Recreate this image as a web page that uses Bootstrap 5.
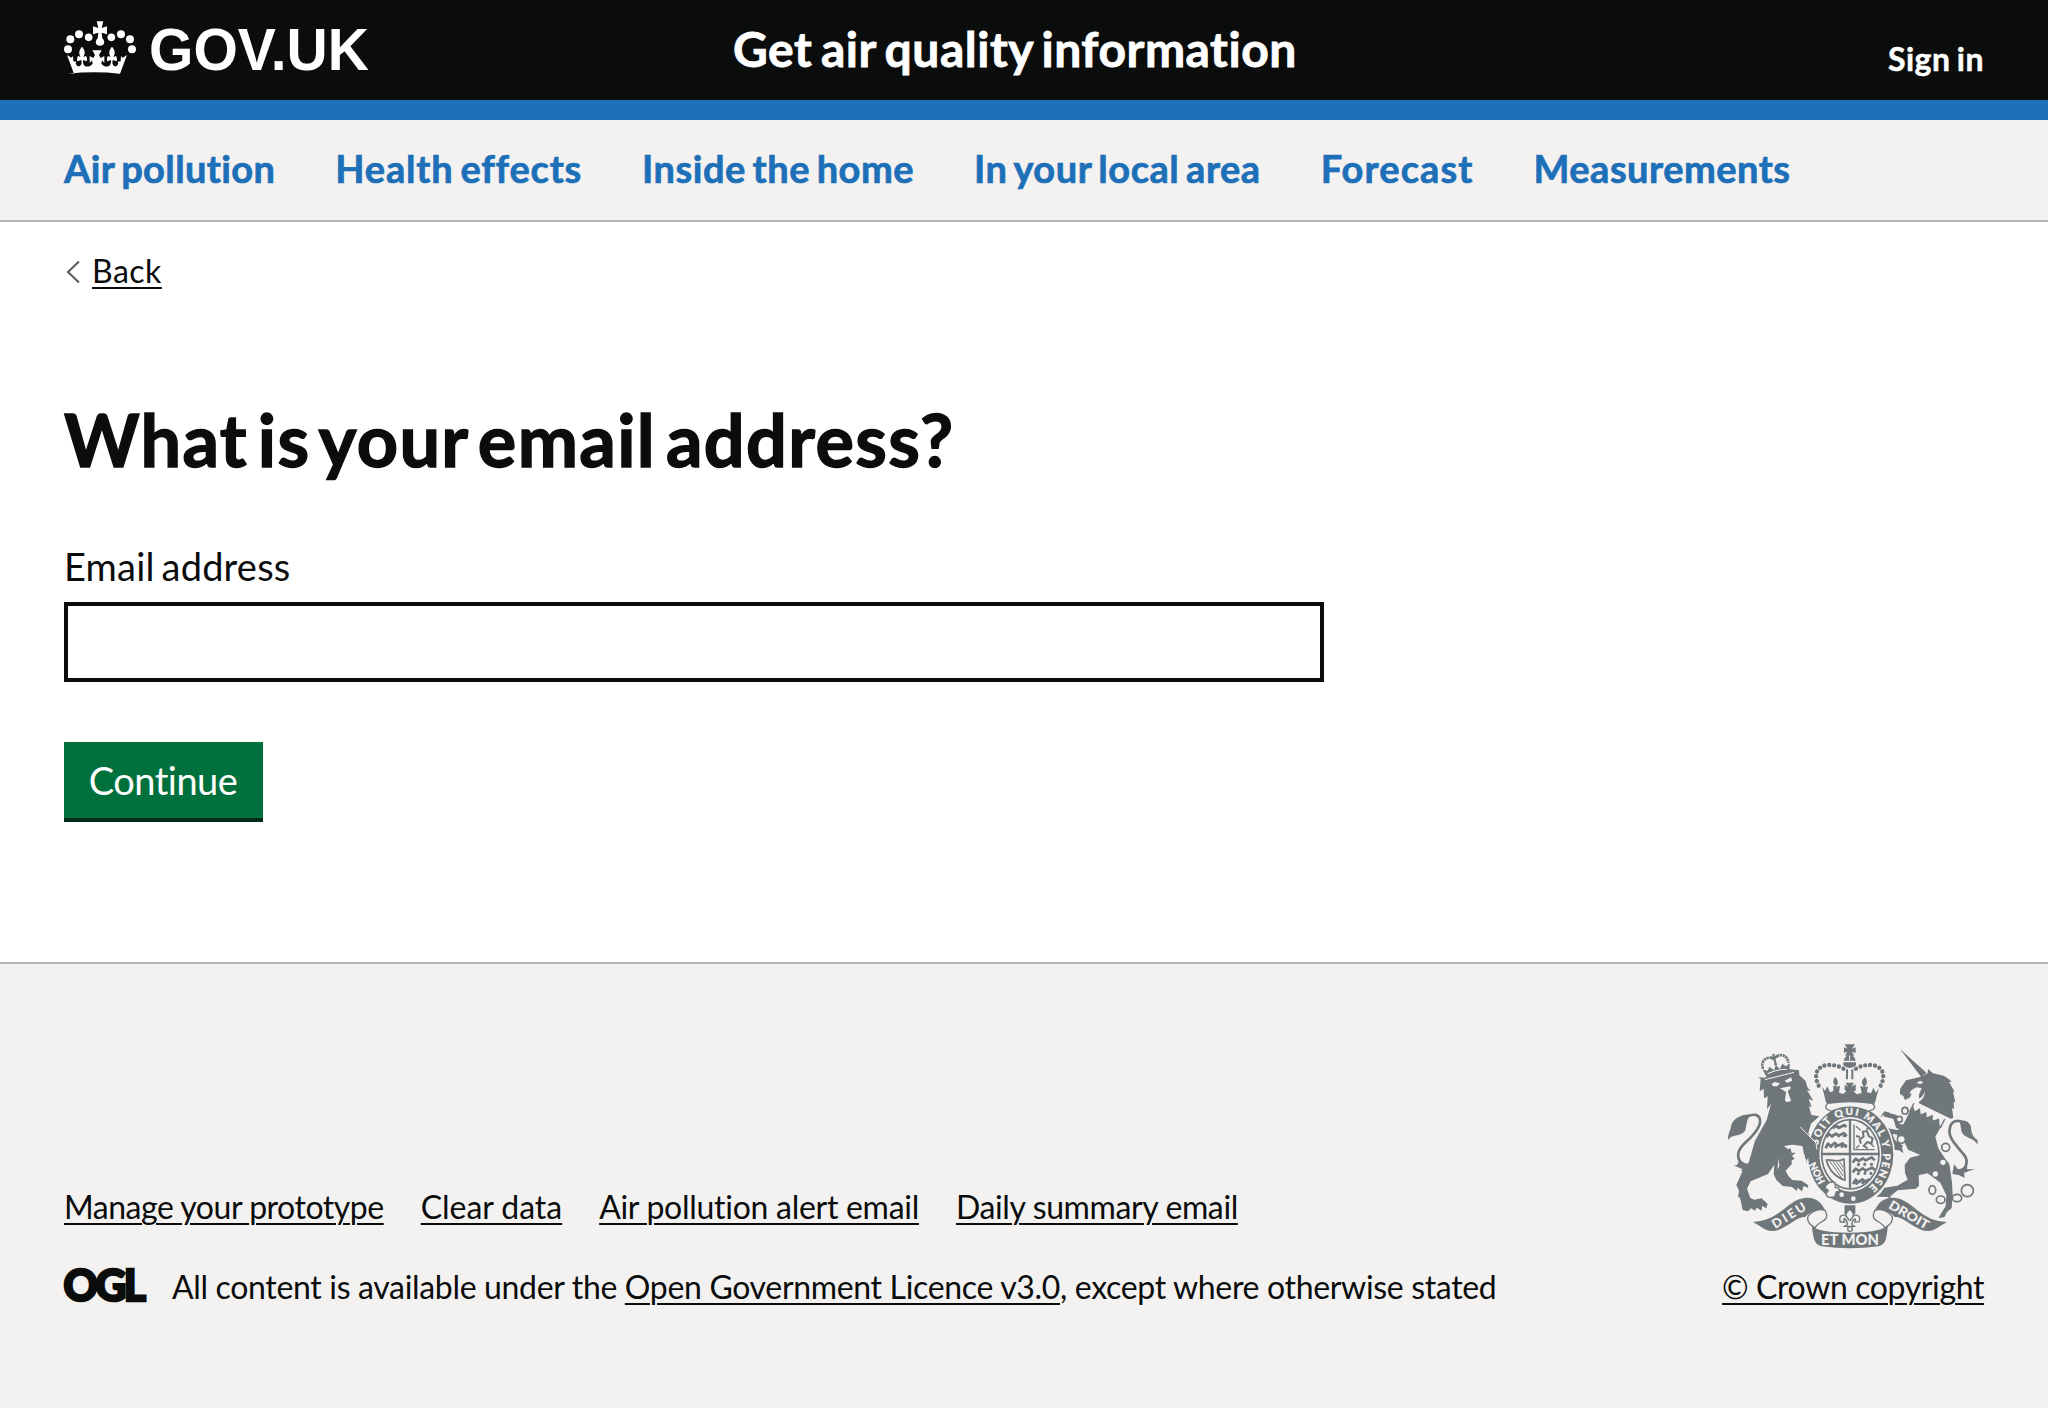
<!DOCTYPE html>
<html lang="en">
<head>
<meta charset="utf-8">
<meta name="viewport" content="width=device-width, initial-scale=1">
<title>What is your email address?</title>
<link href="https://cdn.jsdelivr.net/npm/bootstrap@5.3.0/dist/css/bootstrap.min.css" rel="stylesheet">
<style>
:root{--ink:#0b0c0c;--blue:#1d70b8;--pale:#f3f2f1;--rule:#b1b4b6}
body{font-family:Lato,"Noto Sans",sans-serif;color:var(--ink);font-size:32px;line-height:40px;letter-spacing:-.33px;min-height:1408px}
a{color:var(--ink);text-decoration-thickness:2px;text-underline-offset:4px}
a:hover{color:var(--ink)}
svg{overflow:visible}
.gutter{padding-left:64px;padding-right:64px}
.masthead{height:120px;background:var(--ink);border-bottom:20px solid var(--blue)}
.masthead a{color:#fff;text-decoration:none}
.brand-link,.service-name,.account{flex:0 0 auto}
.brand-link{width:669px;padding-top:20px}
.service-name{font-size:48px;line-height:60px;font-weight:700;padding-top:19px;letter-spacing:.5px;word-spacing:-3.5px;-webkit-text-stroke:.8px}
.account{font-weight:700;padding-top:39px;letter-spacing:.5px;word-spacing:-2px;-webkit-text-stroke:.5px}
.topics{height:102px;background:var(--pale);border-bottom:2px solid var(--rule);gap:60px;font-size:38px;line-height:50px;font-weight:700;padding-top:23px;word-spacing:-3px;-webkit-text-stroke:.7px}
.topics a{color:var(--blue);text-decoration:none}
.topics .t1{letter-spacing:.38px}.topics .t2{letter-spacing:.79px}.topics .t3{letter-spacing:.51px}
.topics .t4{letter-spacing:.53px}.topics .t5{letter-spacing:1.1px}.topics .t6{letter-spacing:.5px}
.back-row{padding-top:29px;gap:13px}
.back-row a{letter-spacing:.5px}
h1{font-size:72px;line-height:80px;font-weight:700;margin:108px 0 0;letter-spacing:1.35px;word-spacing:-9px;-webkit-text-stroke:1.4px}
.form-label{font-size:38px;line-height:50px;margin:62px 0 11px;letter-spacing:.2px;word-spacing:-3px}
.form-control,.form-control:focus{width:1260px;height:80px;border:4px solid var(--ink);border-radius:0;box-shadow:none}
.btn-go,.btn-go:hover{background:#00703c;color:#fff;border:0;border-radius:0;box-shadow:inset 0 -4px #002d18;font-size:38px;line-height:38px;height:80px;width:199px;padding:0 1px 4px 0;margin-top:60px;letter-spacing:-.5px}
.site-footer{margin-top:140px;height:446px;background:var(--pale);border-top:2px solid var(--rule);padding-top:79px}
.meta-links{gap:37px;padding-top:144px}
.meta-links a:nth-child(1){letter-spacing:-.47px}
.meta-links a:nth-child(2){letter-spacing:-.05px}
.meta-links a:nth-child(3){letter-spacing:-.28px}
.meta-links a:nth-child(4){letter-spacing:-.38px}
.licence{margin-top:40px;gap:26px;white-space:pre}
.crown-link{width:262px;text-align:right;white-space:nowrap;letter-spacing:-.38px}
.crown-link svg{display:block;margin:0 0 17px 4px}
</style>
<script src="https://cdn.jsdelivr.net/npm/bootstrap@5.3.0/dist/js/bootstrap.bundle.min.js"></script>
</head>
<body class="bg-white">
<header class="masthead gutter d-flex">
  <a class="brand-link" href="#" aria-label="GOV.UK">
    <svg width="310" height="60" viewBox="64 20 310 60" fill="#fff">
      <g transform="translate(40 0) scale(.33333)">
        <path d="M170 64h20l-5 20 16-5v24l-16-5 2 17c8 8 9 22-7 22s-15-14-7-22l2-17-16 5V79l16 5z"/>
        <circle cx="84" cy="148" r="12"/><circle cx="91" cy="118" r="12"/><circle cx="117" cy="103" r="12"/><circle cx="146" cy="112" r="11.500"/>
        <circle cx="276" cy="148" r="12"/><circle cx="270" cy="118" r="12"/><circle cx="243" cy="103" r="12"/><circle cx="214" cy="112" r="11.500"/>
        <path d="M102 221 81 165l13 8 5-5 1 16 9 1-2 6c6 13 15 9 18-1l-1-10-12 4c-2-5-1-11 2-16l8 3c-7-12-5-20 4-31 9 11 11 19 4 31l8-3c4 5 4 11 2 16l-11-4c-2 24 18 24 29 11l-2-10-7 8v-21l11 6 5-9-8-14h28l-8 14 5 9 11-6v21l-7-8-2 10c11 13 31 13 29-11l-11 4c-2-5-2-11 2-16l8 3c-7-12-5-20 4-31 9 11 11 19 4 31l8-3c3 5 4 11 2 16l-12-4-1 10c3 10 12 14 18 1l-2-6 9-1 1-16 5 5 13-8-21 56q-78-8-156 0z"/>
      </g>
      <text x="149" y="70" font-family="Liberation Sans,sans-serif" font-weight="700" font-size="58.500" textLength="220" lengthAdjust="spacingAndGlyphs" letter-spacing="0">GOV.UK</text>
    </svg>
  </a>
  <a class="service-name" href="#">Get air quality information</a>
  <a class="account ms-auto" href="#">Sign in</a>
</header>
<nav class="topics gutter d-flex">
  <a class="t1" href="#">Air pollution</a><a class="t2" href="#">Health effects</a><a class="t3" href="#">Inside the home</a><a class="t4" href="#">In your local area</a><a class="t5" href="#">Forecast</a><a class="t6" href="#">Measurements</a>
</nav>
<main class="gutter">
  <div class="back-row d-flex">
    <svg width="15" height="40" fill="none" stroke="#505a5f" stroke-width="2"><path d="M15 10.500 4 21l11 10.500"/></svg>
    <a href="#">Back</a>
  </div>
  <h1>What is your email address?</h1>
  <form>
    <label class="form-label d-block" for="email">Email address</label>
    <input class="form-control" id="email" type="email">
    <button class="btn btn-go d-block" type="button">Continue</button>
  </form>
</main>
<footer class="site-footer gutter d-flex justify-content-between">
  <div>
    <div class="meta-links d-flex"><a href="#">Manage your prototype</a><a href="#">Clear data</a><a href="#">Air pollution alert email</a><a href="#">Daily summary email</a></div>
    <div class="licence d-flex"><svg width="82" height="40" viewBox="64 1266 82 40" fill="#0b0c0c" stroke="#0b0c0c" stroke-width="2.500"><text x="63.500" y="1300" font-family="Lato,sans-serif" font-weight="900" font-size="43" letter-spacing="-2.500" textLength="80" lengthAdjust="spacingAndGlyphs">OGL</text></svg><span>All content is available under the <a href="#">Open Government Licence v3.0</a>, except where otherwise stated</span></div>
  </div>
  <div class="crown-link">
    <svg width="255" height="207" viewBox="78 68 765 621" fill="#6f777b" stroke="none" letter-spacing="0">
      <!-- lion -->
      <path d="M192 172 270 147l27 3 1 15 19 17 5 18 9 12-10-2 19 31-14-5 9 24-8-2 7 26 24 4-25 22-8 28 25 50 7 45-14-12-4 13-12-13-5 10-7-22 0-19-8-13-29-4-26 4 12 10 7-4 4 14 12 0-11 10 8 8-10 6 2 9-19 21 8 16 12 12 28 2 20 14-1 7-13-5-5 16-13-11-3 10-14-12-28-3-19-18-8-17 2-29-19 28-52 22-11 22 10 28 12 5 22-4 18 17-4 13-13-7-1 14-15-9-5 9-12-7-9 9-16-4-8-37-6-2 3-19-8-17 17-38 15-12 24-83 35-62 13-48-12 16 2-39-11 6-1-29-12 8 3-38-8-5z"/>
      <path d="m128 447-28-12c18 2 15-10 15-22 16 18 25 18 45 15l-13 30-25-6z"/>
      <path d="M128 433c-25-25-12-48 10-68 28-26 45-51 42-67-4-18-20-17-37-10" fill="none" stroke="#6f777b" stroke-width="8"/>
      <path d="M151 283c-27-2-53 14-57 31-3 18-10 24-10 45 16-20 39-8 52-29 4-20 5-33 15-47z"/>
      <g fill="#f3f2f1"><path d="m215 190 10-5 15 4-8 9h-13zM253 182l20-11 4 10-14 6zM240 204l30-6 2 6-9 9 8 22c9 10-17 15-16 3l3-23z"/><path d="m236 414-4 34 6-12z"/></g>
      <path d="m194 178 88-22" fill="none" stroke="#f3f2f1" stroke-width="3"/>
      <g transform="translate(228 136) rotate(-13)">
        <path d="m-34 30-8-28 14 7 8-10 11 13L0-2 9 12 20-1l8 10 14-7-8 28q-34-7-68 0z"/>
        <path d="M-30 18q30-7 60 0" fill="none" stroke="#f3f2f1" stroke-width="3"/>
        <path d="M-40 0c-4-31 30-34 39-20 9-14 43-11 39 20" fill="none" stroke="#6f777b" stroke-width="8" stroke-dasharray="7 2"/>
        <path d="M-4-36h8l-2 8 8-3v10l-8-2 2 22H-4l2-22-8 2v-10l8 3z"/>
      </g>
      <!-- unicorn -->
      <path d="m600 86 80 72-17 11zM663 169l20-10 1-13 15 13 32 7 14 9 11 10-9-1 17 31-5-1 7 32-5-2 1 22-6-4 4 31-8 2-95-46 0-26 8-20-16-2-14 8-7 10 7 1-6 12-14 7-5-12-10-6 0-15 18-26z"/>
      <path d="M650 188q12-12 20-1l-10 4zM646 240q24-8 29-28-1 24-20 34z" fill="#f3f2f1"/>
      <g transform="translate(640 248) rotate(27)"><path d="M2 0v27h104V0" fill="none" stroke="#6f777b" stroke-width="4"/><path d="M3 25V8l12 12L25 5l10 15L47 6l8 14L68 5l8 15L90 6l11 19z"/></g>
      <path d="m631 270 93 48-18 31 9 35 19 29 14 18 8 54 2 38-3 40-14 12-8 16-18 2 22-36 2-32-18-38-38-28-27 6 1 31-10 9-54 5-22 18 1 10-8-8-35-1 14-12 10-15 39-6 31-18-8-20-1-24 16-22 31-8-37-16-15-33-17-5-2-17 19-18z"/>
      <path d="M618 320 594 318 586 290 553 282M620 342 566 331 579 364 605 382" fill="none" stroke="#6f777b" stroke-width="14" stroke-linejoin="round"/>
      <path d="m558 280-17 11 12-18 18 4zM605 376l5 23-12-9-17-1-4-13z"/>
      <g fill="#f3f2f1"><circle cx="729" cy="426" r="8"/><circle cx="706" cy="461" r="8"/></g>
      <g fill="#f3f2f1" stroke="#6f777b" stroke-width="5"><ellipse cx="615" cy="271" rx="9" ry="10"/><ellipse cx="598" cy="297" rx="9" ry="9"/><ellipse cx="604" cy="357" rx="12" ry="12"/><circle cx="737" cy="381" r="12"/><ellipse cx="697" cy="509" rx="10" ry="13"/><ellipse cx="722" cy="538" rx="13" ry="11"/><ellipse cx="771" cy="533" rx="14" ry="11"/><circle cx="802" cy="511" r="18"/></g>
      <path d="M777 456c25-14 30-36 13-55-25-31-48-50-40-80 5-20 23-23 40-15" fill="none" stroke="#6f777b" stroke-width="8"/>
      <path d="M777 303c17-6 30 0 36 16 1 18 4 30 20 40v14c-9-21-40-18-48-38-4-15-2-24-8-32zM762 432l12 15 14-3 14-14-1 17 24 0-18 5-15 6 2 15-18-9-19-3z"/>
      <!-- garter -->
      <ellipse cx="452" cy="403" rx="133" ry="151" fill="#f3f2f1"/>
      <ellipse cx="452" cy="403" rx="128" ry="147"/>
      <ellipse cx="451" cy="402" rx="93" ry="112" fill="#f3f2f1"/>
      <ellipse cx="451" cy="402" rx="86" ry="104" fill="none" stroke="#6f777b" stroke-width="5"/>
      <path d="M450 298v208M364 401h174" stroke="#6f777b" stroke-width="7"/>
      <g fill="none" stroke="#6f777b" stroke-width="8" stroke-linejoin="round">
        <path d="m377 384 7-14 9 8 11-10 10 8 14-7 10 12m-59-31 8-9 9 7 12-8 8 6 16-8 8 10m-42-24 10-7 8 6 17-9 6 6m-48 62 4-9m10 9 6-9m14 9 2-9m12 9-3-10m-39-22 4-8m13 8 6-7m12 7 2-7m-22-20 2-8"/>
        <path d="m459 491 8-13 9 8 11-9 9 7 12-8m-50-20 9-11 10 7 11-8 9 7 19-9 9 7m-67-22 9-12 9 7 13-8 8 6 18-9 9 9M468 493l4-8m15 6 3-8m-17-19 4-8m16 7 4-8m14 8 3-8m-40-18 3-9m15 8 4-8m17 8 3-8"/>
        <path d="M462 312v76h62M468 318l14 12m40 50-14-15M468 384l10-9" stroke-width="4"/>
        <path d="m483 370-4-13 12-8-3-15 13-2 5 15 12 7-4 16-12-5-11 12 12 7m-23-34-12-3m31-22 12-2" stroke-width="6"/>
        <path d="M379 419c21-2 30 9 53-3l3 64c-26-9-48-30-56-61z" stroke-width="5"/>
        <path d="m389 422 38 54m-28-53 30 44m-20-43 21 30m-12-31 12 18" stroke-width="3"/>
      </g>
      <path id="motto-arc" d="M376 482A99 119 0 1 1 505 502" fill="none"/>
      <g fill="#f3f2f1" stroke="#f3f2f1" stroke-width=".8" font-family="Lato,sans-serif" font-weight="900">
        <text font-size="30" textLength="68" transform="translate(376 484) rotate(-117)" lengthAdjust="spacingAndGlyphs">HON</text>
        <text font-size="31"><textPath href="#motto-arc" startOffset="112" textLength="425">SOIT QUI MAL Y PENSE</textPath></text>
      </g>
      <path d="M385 500c35 20 71 22 105 14l28 12c-45 26-87 22-131-3z"/>
      <path d="M405 487c-13-6-27 2-30 15l10 9-8 10c6 12 17 12 27 8l5-15 9 1-2-12-10-2z" fill="#f3f2f1" stroke="#6f777b" stroke-width="4"/>
      <g fill="#f3f2f1"><circle cx="425" cy="523" r="7"/><circle cx="460" cy="535" r="7"/></g>
      <path d="m300 321 51 50 7 54-17-12-5 14-12-14-4 9-9-25-5-28z"/>
      <path d="m301 320 47 48 3 20" fill="none" stroke="#f3f2f1" stroke-width="3"/>
      <!-- central crown -->
      <path d="M434 72h31l-9 13 11-4v17l-11-4 7 12h-28l7-12-10 4V81l10 4z"/>
      <path d="M432 121c2-22 33-22 35 0zM430 126h38v9q-18 16-38 0z"/><path d="M441 147v30m16-30v30" stroke="#6f777b" stroke-width="6"/>
      <path d="M449 106v14" stroke="#f3f2f1" stroke-width="3"/>
      <g fill="none" stroke="#6f777b" stroke-width="13" stroke-linecap="round" stroke-dasharray=".1 14.500"><path d="M356 196c-20-40 2-62 30-62 19-1 37 6 49 14"/><path d="M542 196c20-40-2-62-30-62-19-1-37 6-49 14"/></g>
      <path d="m378 246-12-48 9 14 7-14 8 18 10-4 0-16 9 1c-14-6-9-21-4-27 9 7 13 20 2 29l13-2-3 20 12 4 10-8-5-4v-16l9 6-6-12h25l-8 12 13-7v19l-7 2 11 9 14-4-4-20 12 1c-12-10-7-21 2-29 6 6 10 22-2 29l11 0-4 16 13 4 7-17 8 15 9-15-13 48q-71-8-143 0z"/>
      <path d="M384 249q66-10 132 0 13 8 5 17l-15 7q-56-25-113 0l-13-7q-7-8 4-17z" fill="#f3f2f1" stroke="#6f777b" stroke-width="4"/>
      <!-- scrolls -->
      <path d="M434 555h32v25l-11 2-5-15-6 15-11-2z"/>
      <path d="M449 566c-22 22-5 25-1 35-15-28-35-16-27 4l13 0c-8-18 8-10 8 8l-8 5h29l-7-5c0-17 15-25 9-8l13-1c7-19-14-31-27-3 3-10 20-15-2-35z" fill="#f3f2f1" stroke="#6f777b" stroke-width="4"/><circle cx="450" cy="626" r="7" fill="#f3f2f1" stroke="#6f777b" stroke-width="4"/>
      <path d="M159 605c85-4 101-69 160-73 32-1 46 16 57 39-33-4-52 8-59 18-31 0-66 44-101 43-20 0-32-14-57-27z"/>
      <path d="M741 605c-85-4-101-69-160-73-32-1-46 16-57 39 33-4 52 8 59 18 31 0 66 44 101 43 20 0 32-14 57-27z"/>
      <path d="M376 571c-25-12-55 13-53 24 2 20 13 19 22 28 8-20 39-20 35-39zM524 571c25-12 55 13 53 24-2 20-13 19-22 28-8-20-39-20-35-39z" fill="#f3f2f1" stroke="#6f777b" stroke-width="4"/>
      <path d="M335 615q18 23 115 22t114-22c-5 34-3 58-29 63q-85 12-170 0c-26-5-25-32-30-63z"/>
      <g fill="#f3f2f1" font-family="Lato,sans-serif" font-weight="900">
        <text x="363" y="675" font-size="46" textLength="174" lengthAdjust="spacingAndGlyphs">ET MON</text>
        <text transform="translate(226 626) rotate(-32)" font-size="38" textLength="112">DIEU</text>
        <text transform="translate(563 562) rotate(30)" font-size="38" textLength="133" lengthAdjust="spacingAndGlyphs">DROIT</text>
      </g>
    </svg>
    <a href="#">© Crown copyright</a>
  </div>
</footer>
</body>
</html>
